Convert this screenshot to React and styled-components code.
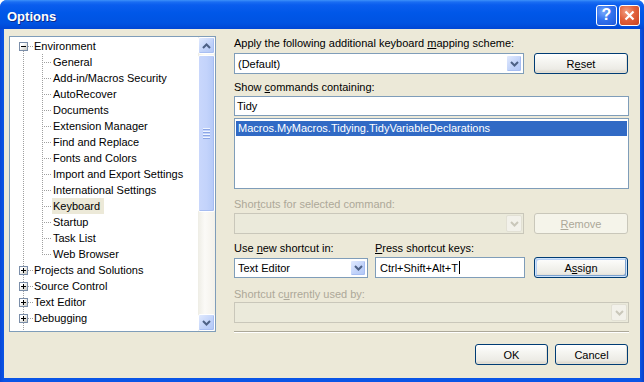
import React from "react";
import styled, { createGlobalStyle, css } from "styled-components";

const GlobalStyle = createGlobalStyle`
  html, body {
    margin: 0;
    padding: 0;
    background: #ffffff;
  }
  body {
    font-family: "Liberation Sans", Arial, sans-serif;
    font-size: 11px;
    color: #000;
  }
`;

const Window = styled.div`
  width: 644px;
  height: 382px;
  box-sizing: border-box;
  display: flex;
  flex-direction: column;
  background: linear-gradient(to right, #0848D8, #0A55E6 4px, #0A55E6 calc(100% - 4px), #0840C8);
  border-radius: 7px 7px 0 0;
  overflow: hidden;
`;

const TitleBar = styled.div`
  height: 29px;
  flex: none;
  display: flex;
  align-items: center;
  padding: 1px 4px 0 7px;
  box-sizing: border-box;
  background: linear-gradient(
    to bottom,
    #3D91F9 0,
    #1A6DF2 2px,
    #0A5DEE 5px,
    #0057E8 45%,
    #0053E2 80%,
    #0046D4 100%
  );
`;

const Title = styled.div`
  flex: 1;
  padding-top: 2px;
  color: #fff;
  font: bold 13px "Liberation Sans", Arial, sans-serif;
  text-shadow: 1px 1px 0 #0B2A8C;
`;

const CaptionButton = styled.div`
  width: 21px;
  height: 21px;
  box-sizing: border-box;
  margin-left: 2px;
  border: 1px solid #fff;
  border-radius: 3px;
  display: flex;
  align-items: center;
  justify-content: center;
  color: #fff;
  font: bold 16px "Liberation Sans", Arial, sans-serif;
  background: ${(p) =>
    p.close
      ? "radial-gradient(circle at 35% 30%, #F2A084 0, #E2613C 45%, #C9431F 100%)"
      : "radial-gradient(circle at 35% 30%, #79AAFC 0, #3272EE 45%, #1D58DA 100%)"};
`;

const Body = styled.div`
  flex: 1;
  margin: 0 4px 4px 4px;
  background: #ECE9D8;
  display: flex;
  flex-direction: column;
  padding: 7px 11px 0 5px;
`;

const TopRow = styled.div`
  display: flex;
  align-items: flex-start;
`;

/* ---------- tree ---------- */

const Tree = styled.div`
  width: 207px;
  height: 296px;
  box-sizing: border-box;
  border: 1px solid #7F9DB9;
  background: #fff;
  display: flex;
  flex: none;
`;

const TreeList = styled.div`
  flex: 1;
  overflow: hidden;
  padding-top: 1px;
  background: repeating-linear-gradient(to bottom, #A0A0A0 0 1px, transparent 1px 2px) 13px 14px / 1px 100% no-repeat;
`;

const ChildGroup = styled.div`
  background: repeating-linear-gradient(to bottom, #A0A0A0 0 1px, transparent 1px 2px) 32px 0 / 1px calc(100% - 8px) no-repeat;
`;

const TreeRow = styled.div`
  height: 16px;
  display: flex;
  align-items: flex-start;
  padding-left: ${(p) => (p.child ? 32 : 9)}px;
  white-space: nowrap;
`;

const ExpandBox = styled.div`
  width: 9px;
  height: 9px;
  box-sizing: border-box;
  margin-top: 4px;
  border: 1px solid #7B8EA9;
  background: linear-gradient(135deg, #ffffff 30%, #C9C8BF 100%);
  display: flex;
  align-items: center;
  justify-content: center;
  flex: none;
`;

const Tick = styled.div`
  width: ${(p) => p.width}px;
  height: 1px;
  margin-top: 8px;
  flex: none;
  background: repeating-linear-gradient(to right, #A0A0A0 0 1px, transparent 1px 2px);
`;

const TreeLabel = styled.div`
  height: 16px;
  line-height: 16px;
  padding: 0 4px 0 1px;
  background: ${(p) => (p.selected ? "#ECE9D8" : "transparent")};
`;

const ScrollBar = styled.div`
  width: 17px;
  flex: none;
  display: flex;
  flex-direction: column;
  background: linear-gradient(to right, #EEEDE5, #FBFAF7 40%, #F3F1EA);
`;

const ScrollButton = styled.div`
  height: 17px;
  box-sizing: border-box;
  border: 1px solid #fff;
  border-radius: 2px;
  background: linear-gradient(135deg, #E1EAFE, #BFD1F9 60%, #B2C7F6);
  box-shadow: inset -1px -1px 0 #A8BEF2;
  display: flex;
  align-items: center;
  justify-content: center;
  flex: none;
`;

const Track = styled.div`
  flex: 1;
  display: flex;
  flex-direction: column;
`;

const Thumb = styled.div`
  height: 157px;
  margin-top: 1px;
  box-sizing: border-box;
  border: 1px solid #fff;
  border-radius: 2px;
  background: linear-gradient(to right, #C9D7FC, #C3D3FB 50%, #B6CAF7);
  box-shadow: inset -1px -1px 0 #A6BCF1;
  display: flex;
  flex-direction: column;
  align-items: center;
  justify-content: center;
  gap: 1px;
`;

const GripLine = styled.div`
  width: 7px;
  height: 1px;
  background: #EEF4FE;
  box-shadow: 0 1px 0 #8CA6E6;
  margin-bottom: 1px;
`;

/* ---------- right side ---------- */

const RightColumn = styled.div`
  width: 395px;
  margin-left: 18px;
  display: flex;
  flex-direction: column;
`;

const Label = styled.div`
  height: 14px;
  line-height: 14px;
  margin-top: ${(p) => p.gap || 0}px;
  width: ${(p) => (p.width ? `${p.width}px` : "auto")};
  color: ${(p) => (p.disabled ? "#ACA899" : "#000")};
  white-space: nowrap;
  flex: none;
`;

const Key = styled.span`
  text-decoration: underline;
  text-underline-offset: 1px;
`;

const Row = styled.div`
  display: flex;
  align-items: center;
  margin-top: ${(p) => p.gap || 0}px;
  gap: ${(p) => p.spacing || 0}px;
`;

const Combo = styled.div`
  width: ${(p) => (p.width ? `${p.width}px` : "100%")};
  height: ${(p) => p.height || 21}px;
  box-sizing: border-box;
  border: 1px solid ${(p) => (p.disabled ? "#C9C7BA" : "#7F9DB9")};
  background: ${(p) => (p.disabled ? "#EBEADB" : "#fff")};
  display: flex;
  align-items: center;
  padding: 1px;
  flex: none;
`;

const ComboText = styled.div`
  flex: 1;
  padding-left: 2px;
  white-space: nowrap;
`;

const DropButton = styled.div`
  width: 16px;
  height: 100%;
  box-sizing: border-box;
  border-radius: 2px;
  display: flex;
  align-items: center;
  justify-content: center;
  ${(p) =>
    p.disabled
      ? css`
          border: 1px solid #E2E0D4;
          background: #F2F1EA;
        `
      : css`
          border: 1px solid #fff;
          background: linear-gradient(135deg, #E1EAFE, #BFD1F9 60%, #B2C7F6);
          box-shadow: inset -1px -1px 0 #A8BEF2;
        `}
`;

const TextBox = styled.div`
  width: ${(p) => (p.width ? `${p.width}px` : "100%")};
  height: ${(p) => p.height || 20}px;
  margin-top: ${(p) => p.gap || 0}px;
  box-sizing: border-box;
  border: 1px solid #7F9DB9;
  background: #fff;
  display: flex;
  align-items: center;
  padding-left: ${(p) => p.indent || 3}px;
  white-space: nowrap;
  flex: none;
`;

const Caret = styled.span`
  display: inline-block;
  width: 1px;
  height: 13px;
  background: #000;
  margin-left: 1px;
`;

const ListBox = styled.div`
  height: 71px;
  margin-top: 2px;
  box-sizing: border-box;
  border: 1px solid #7F9DB9;
  background: #fff;
  padding: 2px 0 0 1px;
`;

const ListItem = styled.div`
  height: 15px;
  line-height: 15px;
  margin-right: 1px;
  padding-left: 2px;
  background: ${(p) => (p.selected ? "#316AC5" : "transparent")};
  color: ${(p) => (p.selected ? "#fff" : "#000")};
`;

const Button = styled.div`
  width: ${(p) => p.width || 94}px;
  height: ${(p) => p.height || 21}px;
  box-sizing: border-box;
  margin-left: ${(p) => (p.push ? "auto" : "0")};
  margin-right: ${(p) => p.right || 0}px;
  border-radius: 3px;
  display: flex;
  align-items: center;
  justify-content: center;
  flex: none;
  ${(p) =>
    p.disabled
      ? css`
          border: 1px solid #C9C7BA;
          background: #F5F4EA;
          color: #ACA899;
        `
      : css`
          border: 1px solid #003C74;
          background: linear-gradient(to bottom, #FFFFFF 0, #F6F6F2 35%, #ECEBE5 80%, #D8D2C6 100%);
          box-shadow: ${p.focused
            ? "inset 0 0 0 1px #CEE3FC, inset -2px -2px 0 #7DA2CE, inset 2px 2px 0 #B6D0F4"
            : "inset -1px -1px 0 #E3DFD4"};
        `}
`;

const Separator = styled.div`
  height: 0;
  margin-top: 8px;
  border-top: 1px solid #ACA899;
  border-bottom: 1px solid #fff;
`;

const Footer = styled.div`
  display: flex;
  justify-content: flex-end;
  gap: 7px;
  margin-top: 11px;
  padding-right: 1px;
`;

const Chevron = ({ up, color = "#4D6185" }) => (
  <svg width="9" height="6" viewBox="0 0 9 6">
    <path
      d={up ? "M1 5 L4.5 1.5 L8 5" : "M1 1 L4.5 4.5 L8 1"}
      fill="none"
      stroke={color}
      strokeWidth="2"
    />
  </svg>
);

const Sign = ({ minus }) => (
  <svg width="7" height="7" viewBox="0 0 7 7">
    <rect x="1" y="3" width="5" height="1" fill="#000" />
    {!minus && <rect x="3" y="1" width="1" height="5" fill="#000" />}
  </svg>
);

const environmentPages = [
  "General",
  "Add-in/Macros Security",
  "AutoRecover",
  "Documents",
  "Extension Manager",
  "Find and Replace",
  "Fonts and Colors",
  "Import and Export Settings",
  "International Settings",
  "Keyboard",
  "Startup",
  "Task List",
  "Web Browser",
];

const otherCategories = [
  "Projects and Solutions",
  "Source Control",
  "Text Editor",
  "Debugging",
];

const OptionsTree = () => (
  <Tree>
    <TreeList>
      <TreeRow>
        <ExpandBox>
          <Sign minus />
        </ExpandBox>
        <Tick width={5} />
        <TreeLabel>Environment</TreeLabel>
      </TreeRow>
      <ChildGroup>
        {environmentPages.map((page) => (
          <TreeRow child key={page}>
            <Tick width={10} />
            <TreeLabel selected={page === "Keyboard"}>{page}</TreeLabel>
          </TreeRow>
        ))}
      </ChildGroup>
      {otherCategories.map((cat) => (
        <TreeRow key={cat}>
          <ExpandBox>
            <Sign />
          </ExpandBox>
          <Tick width={5} />
          <TreeLabel>{cat}</TreeLabel>
        </TreeRow>
      ))}
    </TreeList>
    <ScrollBar>
      <ScrollButton>
        <Chevron up />
      </ScrollButton>
      <Track>
        <Thumb>
          <GripLine />
          <GripLine />
          <GripLine />
          <GripLine />
        </Thumb>
      </Track>
      <ScrollButton>
        <Chevron />
      </ScrollButton>
    </ScrollBar>
  </Tree>
);

const App = () => (
  <>
    <GlobalStyle />
    <Window>
      <TitleBar>
        <Title>Options</Title>
        <CaptionButton>?</CaptionButton>
        <CaptionButton close>
          <svg width="11" height="11" viewBox="0 0 11 11">
            <path d="M1.5 1.5 L9.5 9.5 M9.5 1.5 L1.5 9.5" stroke="#fff" strokeWidth="2.2" />
          </svg>
        </CaptionButton>
      </TitleBar>
      <Body>
        <TopRow>
          <OptionsTree />
          <RightColumn>
            <Label>
              Apply the following additional keyboard <Key>m</Key>apping scheme:
            </Label>
            <Row gap={3}>
              <Combo width={290}>
                <ComboText>(Default)</ComboText>
                <DropButton>
                  <Chevron />
                </DropButton>
              </Combo>
              <Button push right={1}>
                R<Key>e</Key>set
              </Button>
            </Row>
            <Label gap={6}>
              Show <Key>c</Key>ommands containing:
            </Label>
            <TextBox gap={2} indent={2}>
              Tidy
            </TextBox>
            <ListBox>
              <ListItem selected>Macros.MyMacros.Tidying.TidyVariableDeclarations</ListItem>
            </ListBox>
            <Label gap={8} disabled>
              Shor<Key>t</Key>cuts for selected command:
            </Label>
            <Row gap={2}>
              <Combo width={290} disabled>
                <ComboText />
                <DropButton disabled>
                  <Chevron color="#C9C7BA" />
                </DropButton>
              </Combo>
              <Button push right={1} disabled>
                <Key>R</Key>emove
              </Button>
            </Row>
            <Row gap={7}>
              <Label width={141}>
                Use <Key>n</Key>ew shortcut in:
              </Label>
              <Label>
                <Key>P</Key>ress shortcut keys:
              </Label>
            </Row>
            <Row gap={2} spacing={7}>
              <Combo width={134} height={20}>
                <ComboText>Text Editor</ComboText>
                <DropButton>
                  <Chevron />
                </DropButton>
              </Combo>
              <TextBox width={150} height={21} indent={4}>
                Ctrl+Shift+Alt+T
                <Caret />
              </TextBox>
              <Button push right={1} focused>
                A<Key>s</Key>sign
              </Button>
            </Row>
            <Label gap={9} disabled>
              Shortcut c<Key>u</Key>rrently used by:
            </Label>
            <Row gap={1}>
              <Combo disabled>
                <ComboText />
                <DropButton disabled>
                  <Chevron color="#C9C7BA" />
                </DropButton>
              </Combo>
            </Row>
            <Separator />
          </RightColumn>
        </TopRow>
        <Footer>
          <Button width={73}>OK</Button>
          <Button width={73}>Cancel</Button>
        </Footer>
      </Body>
    </Window>
  </>
);

export default App;
